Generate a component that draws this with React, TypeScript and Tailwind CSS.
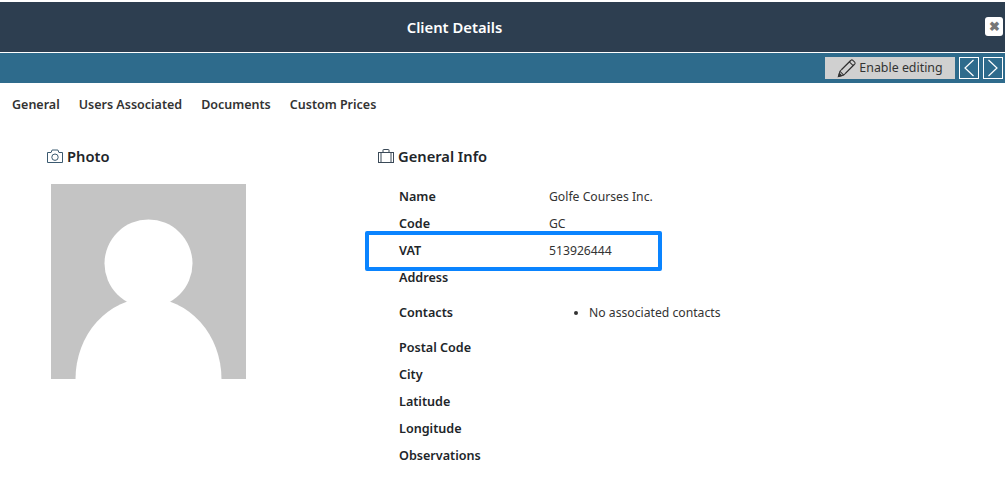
function Row({ label, value }: { label: string; value?: string }) {
  return (
    <div className="flex h-[27px] items-center">
      <div className="w-[150px] text-[12.6px] font-semibold text-[#212529]">{label}</div>
      {value && <div className="text-[12.2px] text-[#333]">{value}</div>}
    </div>
  );
}

function PencilIcon() {
  return (
    <svg viewBox="0 0 20 20" className="h-[19px] w-[19px]" fill="none" stroke="#333" strokeWidth="1.1">
      <path d="M1.5 18.5l1.6-5.6L14.6 1.4c.6-.6 1.5-.6 2.1 0l1.9 1.9c.6.6.6 1.5 0 2.1L7.1 16.9z" />
      <path d="M3.1 12.9l4 4M13 3l4 4M5 11l9.5-9.5M9 15l9-9" />
      <path d="M1.5 18.5l1-3.4 2.4 2.4z" fill="#333" />
    </svg>
  );
}

function CameraIcon() {
  return (
    <svg viewBox="0 0 16 14" className="h-[14px] w-[16px]" fill="none" stroke="#3b5a70" strokeWidth="1">
      <path d="M.5 3.5h3.6l1-2.5h5.8l1 2.5h3.6v10H.5z" />
      <circle cx="8" cy="8.2" r="3.2" />
    </svg>
  );
}

function BriefcaseIcon() {
  return (
    <svg viewBox="0 0 16 14" className="h-[14px] w-[16px]" fill="none" stroke="#3b4a58" strokeWidth="1">
      <rect x=".5" y="3.5" width="15" height="10" />
      <path d="M5 3.5v-2.5a.5.5 0 0 1 .5-.5h5a.5.5 0 0 1 .5.5v2.5M3 3.5v10M13 3.5v10" />
    </svg>
  );
}

function NavButton({ dir }: { dir: "left" | "right" }) {
  return (
    <button type="button" className="flex h-[22px] w-[20px] items-center justify-center border border-white">
      <svg viewBox="0 0 12 18" className="h-[18px] w-[12px]" fill="none" stroke="#fff" strokeWidth="1.2">
        <path d={dir === "left" ? "M10.5 1L2 9l8.5 8" : "M1.5 1L10 9l-8.5 8"} />
      </svg>
    </button>
  );
}

export default function App() {
  return (
    <div className="h-[490px] w-[1005px] overflow-hidden bg-white pt-[2px] font-['Noto_Sans','Open_Sans',sans-serif] text-[#212529]">
      {/* Title bar */}
      <div className="relative flex h-[50px] items-center justify-center bg-[#2d3e50]">
        <span className="ml-[-96px] text-[14.8px] font-semibold text-white">Client Details</span>
        <button
          type="button"
          className="absolute right-[2px] top-[15px] flex h-[19px] w-[18px] items-center justify-center rounded-[3px] bg-white text-[13px] font-black leading-none text-[#777]"
        >
          ✖
        </button>
      </div>

      {/* Toolbar */}
      <div className="mt-px flex h-[30px] items-center justify-end gap-[4px] bg-[#2e6b8c] pr-[2px]">
        <button
          type="button"
          className="flex h-[22px] w-[130px] items-center justify-center gap-[3px] bg-[#d0d0d0] text-[12.4px] text-[#333]"
        >
          <PencilIcon />
          Enable editing
        </button>
        <NavButton dir="left" />
        <NavButton dir="right" />
      </div>

      {/* Tabs */}
      <div className="flex h-[44px] items-center gap-[19px] pl-[12px] text-[12.5px] font-semibold text-[#333]">
        <span>General</span>
        <span>Users Associated</span>
        <span>Documents</span>
        <span>Custom Prices</span>
      </div>

      <div className="flex pt-[17px]">
        {/* Photo */}
        <div className="w-[378px] pl-[47px]">
          <div className="flex h-[24px] items-center gap-[4px] text-[14.7px] font-semibold">
            <CameraIcon />
            Photo
          </div>
          <svg viewBox="0 0 195 195" className="ml-[4px] mt-[16px] h-[195px] w-[195px]">
            <rect width="195" height="195" fill="#c4c4c4" />
            <circle cx="97.5" cy="79.5" r="44" fill="#fff" />
            <ellipse cx="97.5" cy="195" rx="73" ry="81" fill="#fff" />
          </svg>
        </div>

        {/* General info */}
        <div>
          <div className="flex h-[24px] items-center gap-[4px] text-[14.7px] font-semibold">
            <BriefcaseIcon />
            General Info
          </div>
          <div className="relative mt-[16px] pl-[21px]">
            <Row label="Name" value="Golfe Courses Inc." />
            <Row label="Code" value="GC" />
            <Row label="VAT" value="513926444" />
            <Row label="Address" />
            <div className="flex h-[43px] items-center">
              <div className="w-[150px] text-[12.6px] font-semibold">Contacts</div>
              <ul className="list-disc pl-[40px] text-[12.2px] text-[#333]">
                <li>No associated contacts</li>
              </ul>
            </div>
            <Row label="Postal Code" />
            <Row label="City" />
            <Row label="Latitude" />
            <Row label="Longitude" />
            <Row label="Observations" />
            <div className="absolute left-[-13px] top-[47px] h-[40px] w-[297px] rounded-[2px] border-[4px] border-[#0a84ff]" />
          </div>
        </div>
      </div>
    </div>
  );
}
